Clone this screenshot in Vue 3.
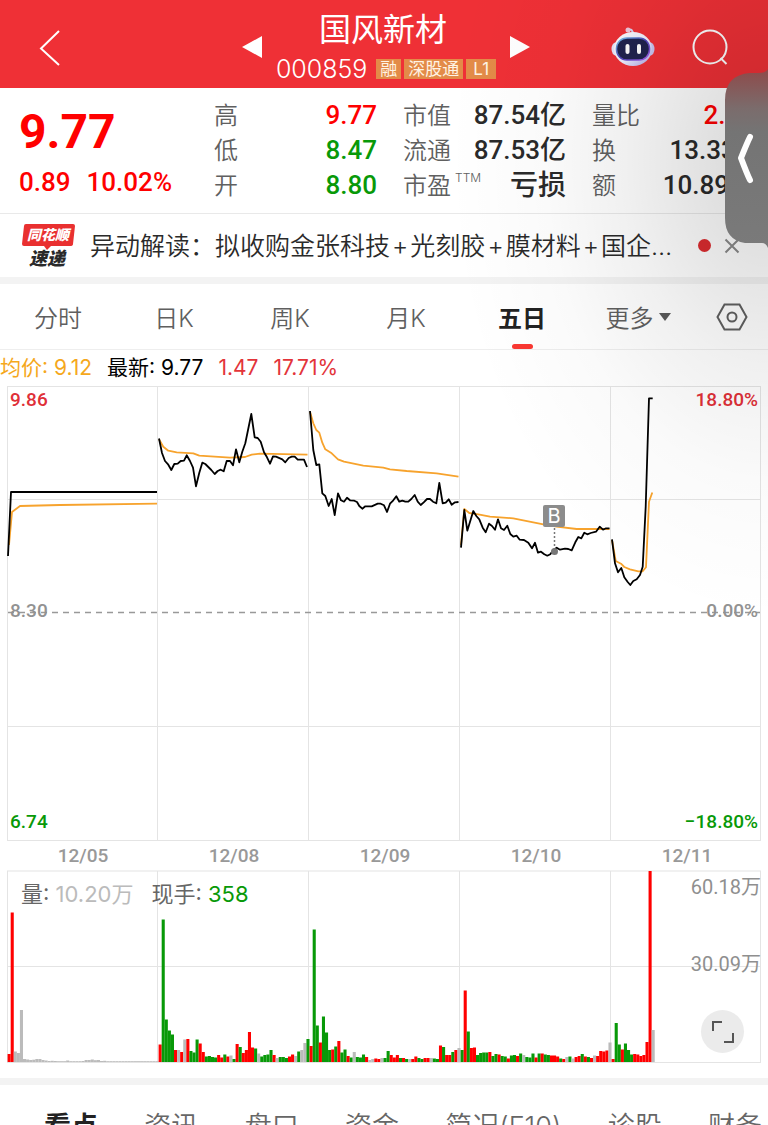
<script setup>
import { ref } from 'vue'

const tags = ['融', '深股通', 'L1']

const stats = [
  [
    { label: '高', value: '9.77', tone: 'up' },
    { label: '低', value: '8.47', tone: 'down' },
    { label: '开', value: '8.80', tone: 'down' },
  ],
  [
    { label: '市值', value: '87.54亿' },
    { label: '流通', value: '87.53亿' },
    { label: '市盈', sup: 'TTM', value: '亏损', tone: 'word' },
  ],
  [
    { label: '量比', value: '2.00', tone: 'up' },
    { label: '换', value: '13.33%' },
    { label: '额', value: '10.89亿' },
  ],
]

const newsParts = ['异动解读：拟收购金张科技', '光刻胶', '膜材料', '国企…']

const periods = ['分时', '日K', '周K', '月K', '五日']
const activePeriod = ref('五日')

const sections = ['看点', '资讯', '盘口', '资金', '简况(F10)', '诊股', '财务']
const activeSection = ref('看点')

const dates = ['12/05', '12/08', '12/09', '12/10', '12/11']
const dayWidth = 151
const gridX = [157.5, 308.5, 459.5, 610.5]

const averageLines = [
  '9,545 12,512 20,506 60,505 157,503.7',
  '159,439.3 163.3,446.7 168.3,450.7 176.7,452.3 193.3,453.3 199.3,455.7 230,457.7 245,457 251.7,454.7 260,453.7 307.5,454.7',
  '310,411.7 313.3,423.3 316.3,430 319.3,432.7 322.3,442.7 325.3,449.3 331.7,453.3 338,459.3 344,461.7 363.3,465.7 383.3,467.7 390,469.3 406.7,471 436.7,473.3 458.5,476.7',
  '461,545 464.3,509 469.3,513 478.3,514.3 490,516.7 513.3,518.3 543.3,524.3 556.7,526.7 576.7,529 609.5,529',
  '612,540 615.7,561 621,563.7 624.3,567 630,569.3 638.3,571.3 642.7,571.3 646,567.3 649,501.7 652.3,492.5',
]
const priceLines = [
  '8,556 11,492 157,492',
  '159,438.5 162,453 165,461 168.3,464.7 171.3,470 174.3,464 177.7,463.7 180.7,461 184,460.7 186.7,455.3 190,461 193,467.7 196,486.3 199.3,472.7 202.3,462.7 205.3,464 211.3,470 214.7,474 217.7,471 220.7,469.7 223.7,471.3 226.7,461 230,461 233,465.3 236,449.3 239.3,462.3 242.3,451.7 245.3,443.3 251.3,414 254.7,437.3 257.7,438 260.7,441.7 264,452.3 267,457.3 270,463.7 273,456.3 276,456.7 282.3,459.3 285.3,462.3 288.7,458 291.7,456.7 294.7,456.7 297.7,459.7 304,459.7 307,467',
  '310,411 313.3,450 316.3,465 319.3,464.3 322.3,493.3 325.3,496 328.7,506 331.7,499 334.7,515 338,493.3 341,500.3 344,501.7 347,497.7 350,500.3 354.3,500.7 357,502 359.3,506 362.3,508.7 365.3,506.3 371.7,506.3 377.7,503.7 380.7,503.7 384,505.3 387,512 390,503.7 393.3,500.3 396.3,496.3 399.3,501.7 402.3,500.7 405.3,501.7 408.3,501.7 411.3,499 414.7,495 417.7,501.7 420.7,505 423.7,502.3 427,499 430,499 433,501.7 436.3,503.3 439.3,483 442.7,503.3 445.7,502.7 448.7,499.3 451.7,504.7 455,502.3 458.5,502',
  '461,547.7 464.3,510 467.3,530.7 473.3,511 476.3,516 479.3,519.3 482.7,527.7 485.7,532.3 489,523.7 492,526 495,529.7 498,519.3 501,528.3 504,530 507.3,525.7 510.3,534 513.3,536.7 516.7,535.7 519.7,539.7 524,540 528.3,542.7 532,548.3 535,542.7 538,552.7 541,551.7 544.3,554.3 547.3,555.7 550.3,554.3 553.3,550 556.7,547.7 560,549.7 565,548.7 568.3,549 571.7,550.3 575.3,542.3 578.3,537 581.3,538.3 584.3,532.7 587.3,534.3 590.7,533 596,531.7 599.7,526.7 603,529.7 606,528.3 609.5,528.3',
  '612,539.3 615,563.3 618,572.3 621.3,568 624.3,577.3 627.7,582 630.3,585 633.3,581 636.7,579.3 640,575 642.7,566.7 645.7,506.7 649,398.3 652.7,398.3',
]

/* r = rising, g = falling, n = flat; the number is the bar height */
const volumes = [
  'r8 r149.5 n10.5 n9 n52 n3 n2.5 n2 n2.3 n3 n3 n2 n1.5 n1 n1.2 n1 n.8 n.8 n.8 n1.5 n.8 n.8 n.8 n.8 n1 n2 n2 n2.5 n1.8 n2 n1 n1.2 n.8 n.8 n.8 n.8 n.8 n.8 n.8 n.8 n.8 n.8 n.8 n.8 n.8 n.8 n.8 n.8 n.8',
  'r17.5 g142.5 g42.5 g31.5 g27.5 r12 n12 r10 n22.5 r23 g11 g9.5 g22.5 r18.5 r10 g5.5 g6 g5 g4.5 r7 r4.5 g7.5 r5.5 n6.5 g3 r18 g15 r9 r12 r30 r14.5 g13.5 n8.5 g5.5 g7 g7.5 g12 r7 n4 g5 g5 g4 r5.5 r7.5 n6 g10.5 n12 n19 g23',
  'r16 g132.5 g36.5 r19.5 g45.5 g29.5 g12 r12.5 g15.5 r21 g9.5 g12.5 r6 g4.5 n10 g5 g4.5 g7.5 r5 n2 n3 r3.5 r3 n4 g4 g11 r7 r4.5 r7 g4 r4 g3 n3 r3 r5.5 g4 g3 r4 r4 n4 g3.5 g3 r16.5 g15 r7 r7 g10 r12 n14',
  'g12 r71.5 g30.5 r14 r14.5 g7 g9 g9.5 g9.5 r10 g6 g8 r7.5 g6 g5.5 r3.5 g6.5 g7 r6 g8.5 n7 g5 g4.5 g8.5 r4.5 g8.5 r8.5 g7.5 g7 r6.5 r6.5 r5.5 g3.5 r3 n5 g5.5 n3.5 r5 r6 g8 r5.5 g5 r4 n6.5 r6 r11 r10.5 r11.5 n19.5',
  'r3 g39 g17.5 r12.5 g18.5 g12 g7.5 r8 r7.5 r6 r7 r20 r191 n32',
]
const fills = { r: '#ff0000', g: '#089908', n: '#bbbbbb' }
const bars = volumes.flatMap((day, d) =>
  day.split(' ').map((item, i) => ({
    key: `${d}-${i}`,
    x: 7.6 + d * dayWidth + i * 3.08,
    height: Number(item.slice(1)),
    fill: fills[item[0]],
  })),
)
</script>

<template>
  <div class="page">
    <header class="top">
      <button class="icon-button back" aria-label="返回">
        <svg width="22" height="38" viewBox="0 0 22 38"><path d="M20 2 2 19.500 20 36" fill="none" stroke="#fff" stroke-width="2" /></svg>
      </button>
      <div class="switcher">
        <button class="icon-button" aria-label="上一只">
          <svg width="20" height="24" viewBox="0 0 20 24"><path d="M20 1v22L0 12z" fill="#fff" /></svg>
        </button>
        <div class="identity">
          <h1>国风新材</h1>
          <div class="code-row">
            <span class="code">000859</span>
            <span v-for="tag in tags" :key="tag" class="tag">{{ tag }}</span>
          </div>
        </div>
        <button class="icon-button" aria-label="下一只">
          <svg width="20" height="24" viewBox="0 0 20 24"><path d="M0 1v22l20-11z" fill="#fff" /></svg>
        </button>
      </div>
      <div class="actions">
        <button class="icon-button" aria-label="智能助手">
          <svg width="44" height="42" viewBox="0 0 44 42">
            <defs>
              <linearGradient id="shell" x1="0" y1="0" x2="1" y2="1">
                <stop offset="0" stop-color="#ffffff" />
                <stop offset="0.550" stop-color="#f0efff" />
                <stop offset="1" stop-color="#aaa4e8" />
              </linearGradient>
              <linearGradient id="rim" x1="0" y1="0" x2="1" y2="1">
                <stop offset="0" stop-color="#77c8ee" />
                <stop offset="0.500" stop-color="#4c43b8" />
                <stop offset="1" stop-color="#a760ef" />
              </linearGradient>
            </defs>
            <path d="M17 4q5-2 5 5" fill="none" stroke="#d6d4f4" stroke-width="2" />
            <circle cx="17" cy="4" r="2.500" fill="#f1c9dc" />
            <ellipse cx="4.500" cy="23" rx="4" ry="6.500" fill="#e8e6fb" />
            <ellipse cx="39.500" cy="23" rx="4" ry="6.500" fill="#c9c3ef" />
            <ellipse cx="22" cy="23" rx="19" ry="17" fill="url(#shell)" />
            <rect x="5.500" y="12" width="33" height="22" rx="10.500" fill="#20234e" stroke="url(#rim)" stroke-width="1.500" />
            <rect x="14.500" y="18" width="4" height="10" rx="2" fill="#fff" />
            <rect x="26" y="18" width="4" height="10" rx="2" fill="#fff" />
          </svg>
        </button>
        <button class="icon-button" aria-label="搜索">
          <svg width="38" height="38" viewBox="0 0 38 38"><g fill="none" stroke="#fff" stroke-width="2"><circle cx="19" cy="19" r="16.500" /><path d="m29.500 30 6 6" /></g></svg>
        </button>
      </div>
    </header>

    <section class="quote">
      <div class="last">
        <strong>9.77</strong>
        <div class="change"><span>0.89</span><span>10.02%</span></div>
      </div>
      <dl v-for="(column, c) in stats" :key="c" class="stats">
        <div v-for="item in column" :key="item.label" class="stat">
          <dt>{{ item.label }}<sup v-if="item.sup">{{ item.sup }}</sup></dt>
          <dd :class="item.tone">{{ item.value }}</dd>
        </div>
      </dl>
    </section>

    <section class="news">
      <svg class="news-logo" width="54" height="46" viewBox="0 0 54 46" role="img" aria-label="同花顺速递">
        <path d="M4 1h47q2 0 2 2l-2 18q0 2-3 2H29l-4 4-3-4H2q-2 0-2-2L2 3q0-2 2-2z" fill="#e93030" />
        <text x="26" y="17" text-anchor="middle" class="logo-top">同花顺</text>
        <text x="25" y="42" text-anchor="middle" class="logo-bottom">速递</text>
      </svg>
      <a href="#" class="headline"><template v-for="(part, i) in newsParts" :key="i"><span v-if="i" class="plus">+</span>{{ part }}</template></a>
      <span class="dot"></span>
      <button class="icon-button" aria-label="关闭">
        <svg width="16" height="16" viewBox="0 0 16 16"><path d="m1.500 1.500 13 13m0-13-13 13" stroke="#8a8a8a" stroke-width="2" /></svg>
      </button>
    </section>

    <nav class="periods">
      <button v-for="period in periods" :key="period" :class="{ active: period === activePeriod }" @click="activePeriod = period">{{ period }}</button>
      <button class="more">更多<svg width="12" height="8" viewBox="0 0 12 8"><path d="M0 0h12L6 8z" fill="#5a5a5a" /></svg></button>
      <button class="settings" aria-label="图表设置">
        <svg width="32" height="28" viewBox="0 0 32 28"><g fill="none" stroke="#606060" stroke-width="2"><path d="M8.500 1.500h15L30.500 14l-7 12.500h-15L1.500 14z" /><circle cx="16" cy="14" r="4.500" /></g></svg>
      </button>
    </nav>

    <div class="legend">
      <span class="average">均价: 9.12</span>
      <span class="latest">最新: 9.77</span>
      <span class="rise">1.47</span>
      <span class="rise">17.71%</span>
    </div>

    <svg class="chart" viewBox="0 386 768 484" role="img" aria-label="五日走势">
      <g fill="none" stroke="#e4e4e4">
        <rect x="7.500" y="386.500" width="753" height="454" />
        <path v-for="x in gridX" :key="x" :d="`M${x} 387V840`" />
        <path d="M8 499.500H760M8 726.500H760" />
      </g>
      <path d="M8 612.500H760" stroke="#999" stroke-width="1.500" stroke-dasharray="6 5" />
      <polyline v-for="points in averageLines" :key="points" :points="points" class="line average-line" />
      <polyline v-for="points in priceLines" :key="points" :points="points" class="line price-line" />
      <path d="M554.500 528v20" stroke="#777" stroke-width="1.500" stroke-dasharray="2 2" />
      <circle cx="554.500" cy="551.500" r="3.500" fill="#777" />
      <rect x="543" y="505" width="22" height="22" rx="2" fill="#8c8c8c" />
      <text x="554" y="523" text-anchor="middle" class="marker">B</text>
      <g class="scale">
        <text x="10" y="406" class="high">9.86</text>
        <text x="758" y="406" text-anchor="end" class="high">18.80%</text>
        <text x="10" y="617">8.30</text>
        <text x="758" y="617" text-anchor="end">0.00%</text>
        <text x="10" y="828" class="low">6.74</text>
        <text x="758" y="828" text-anchor="end" class="low">−18.80%</text>
        <text v-for="(date, i) in dates" :key="date" :x="83 + i * dayWidth" y="862" text-anchor="middle" class="date">{{ date }}</text>
      </g>
    </svg>

    <div class="volume">
      <svg class="chart" viewBox="0 870 768 194" role="img" aria-label="成交量">
        <g fill="none" stroke="#e4e4e4">
          <rect x="7.500" y="871" width="753" height="191.500" />
          <path v-for="x in gridX" :key="x" :d="`M${x} 871V1062`" />
          <path d="M8 966.500H760" />
        </g>
        <rect v-for="bar in bars" :key="bar.key" :x="bar.x" :y="1062 - bar.height" width="3.080" :height="bar.height" :fill="bar.fill" />
        <text x="761" y="894" text-anchor="end" class="amount">60.18万</text>
        <text x="761" y="971" text-anchor="end" class="amount">30.09万</text>
      </svg>
      <div class="volume-legend">
        <span>量: <span class="muted">10.20万</span></span>
        <span>现手: <span class="hand">358</span></span>
      </div>
      <button class="expand" aria-label="全屏">
        <svg width="24" height="24" viewBox="0 0 24 24"><path d="M2 11V2h9M22 13v9h-9" fill="none" stroke="#555" stroke-width="2" /></svg>
      </button>
    </div>

    <nav class="sections">
      <button v-for="section in sections" :key="section" :class="{ active: section === activeSection }" @click="activeSection = section">{{ section }}</button>
    </nav>

    <div class="shade"></div>
    <button class="handle" aria-label="展开侧栏">
      <svg width="44" height="184" viewBox="0 0 44 184">
        <defs>
          <linearGradient id="grip" x1="0" y1="0" x2="0" y2="1">
            <stop offset="0" stop-color="#8e4a4a" />
            <stop offset="0.220" stop-color="#7b6c6c" />
            <stop offset="0.350" stop-color="#747474" />
            <stop offset="1" stop-color="#7a7a7a" />
          </linearGradient>
        </defs>
        <path d="M44 2q-2 4-10 4h-8Q1 8 1 33v118q0 22 20 25h17q4 0 6 5z" fill="url(#grip)" />
        <path d="M26 70q-3 6-9 21 6 16 9 22" fill="none" stroke="#fff" stroke-width="6" stroke-linecap="round" stroke-linejoin="round" />
      </svg>
    </button>
  </div>
</template>

<style>
body {
  overflow: hidden;
  background: #fff;
}
</style>

<style scoped>
.page {
  position: relative;
  height: 100vh;
  overflow: hidden;
  background: #fff;
  color: #2a2a2a;
  font-family: Inter, 'Noto Sans CJK SC', sans-serif;
}
button {
  margin: 0;
  padding: 0;
  border: 0;
  background: none;
  color: inherit;
  font: inherit;
  cursor: pointer;
}
svg {
  display: block;
}
.icon-button {
  flex: none;
}
.top {
  display: grid;
  grid-template-columns: 1fr auto 1fr;
  height: 88px;
  background: #ef3036;
  color: #fff;
}
.back {
  justify-self: start;
  align-self: center;
  margin: 8px 0 0 39px;
}
.switcher {
  display: flex;
  align-items: center;
  gap: 14px;
  padding-left: 4px;
}
.switcher > .icon-button {
  padding-top: 6px;
}
.identity {
  display: flex;
  flex-direction: column;
  align-items: center;
  padding-top: 6px;
}
h1 {
  margin: 0;
  padding-right: 6px;
  font-size: 32px;
  font-weight: 400;
  line-height: 44px;
}
.code-row {
  display: flex;
  align-items: center;
  gap: 3px;
  height: 34px;
}
.code {
  margin-right: 6px;
  font-size: 25px;
  font-weight: 300;
}
.tag {
  padding: 0 4px;
  background: #e38b48;
  color: #fff4e4;
  font-size: 17px;
  line-height: 20px;
}
.tag:last-child {
  padding: 0 7px;
}
.actions {
  display: flex;
  align-items: center;
  justify-content: flex-end;
  gap: 36px;
  padding: 6px 39px 0 0;
}
.quote {
  display: grid;
  grid-template-columns: 169fr 163fr 163fr 163fr;
  column-gap: 26px;
  padding: 10px 13px 10px 19px;
  border-bottom: 1px solid #e9e9e9;
}
.last {
  color: #ff0000;
  font-family: Roboto, sans-serif;
}
.last strong {
  display: block;
  padding-top: 2px;
  font-size: 48px;
  font-weight: 700;
  line-height: 64px;
}
.change {
  display: flex;
  gap: 16px;
  font-size: 26px;
  font-weight: 500;
  line-height: 36px;
}
.stats {
  margin: 0;
}
.stat {
  display: flex;
  justify-content: space-between;
  height: 35px;
  line-height: 35px;
  white-space: nowrap;
}
dt {
  color: #606060;
  font-size: 24px;
  font-weight: 350;
}
sup {
  padding-left: 4px;
  font-size: 12px;
  line-height: 12px;
  vertical-align: 12px;
}
dd {
  margin: 0;
  font-family: Roboto, 'Noto Sans CJK SC', sans-serif;
  font-size: 26px;
  font-weight: 500;
}
.word {
  font-size: 28px;
}
.up {
  color: #ff0000;
}
.down {
  color: #089908;
}
.news {
  display: flex;
  align-items: center;
  height: 63px;
  padding: 0 28px 0 22px;
  border-bottom: 7px solid #f3f3f3;
}
.news-logo {
  flex: none;
}
.logo-top,
.logo-bottom {
  font-family: 'Noto Sans CJK SC', sans-serif;
  font-style: italic;
  font-weight: 900;
}
.logo-top {
  fill: #fff;
  font-size: 14px;
}
.logo-bottom {
  fill: #2a2a2a;
  font-size: 18px;
}
.headline {
  flex: 1;
  margin-left: 14px;
  color: #2a2a2a;
  font-size: 25px;
  font-weight: 350;
  line-height: 36px;
  text-decoration: none;
  white-space: nowrap;
}
.plus {
  padding: 0 2px;
}
.dot {
  flex: none;
  width: 13px;
  height: 13px;
  margin-right: 13px;
  border-radius: 50%;
  background: #dc2c30;
}
.periods {
  display: grid;
  grid-template-columns: repeat(6, 116fr) 72fr;
  height: 65px;
  border-bottom: 1px solid #eee;
  color: #5f5f5f;
  font-size: 24px;
  font-weight: 350;
}
.periods button {
  position: relative;
}
.periods .active {
  color: #222;
  font-weight: 700;
}
.periods .active::after {
  content: '';
  position: absolute;
  bottom: 0;
  left: 50%;
  width: 21px;
  height: 5px;
  margin-left: -10px;
  border-radius: 3px;
  background: #fa3731;
}
.more {
  display: flex;
  align-items: center;
  justify-content: center;
  gap: 5px;
}
.settings {
  display: grid;
  place-items: center;
}
.legend {
  display: flex;
  gap: 15px;
  height: 36px;
  font-size: 21px;
  line-height: 36px;
}
.average {
  color: #f5a81c;
}
.latest {
  color: #000;
}
.rise {
  color: #e3343a;
}
.chart {
  width: 100%;
  height: auto;
}
.line {
  fill: none;
  stroke-width: 1.800;
  stroke-linejoin: round;
}
.average-line {
  stroke: #f7a32d;
}
.price-line {
  stroke: #000;
}
.marker {
  fill: #fff;
  font-size: 20px;
}
.scale {
  fill: #929292;
  font-family: Roboto, sans-serif;
  font-size: 19px;
  font-weight: 500;
}
.high {
  fill: #df3038;
}
.low {
  fill: #089908;
}
.date {
  fill: #999;
}
.amount {
  fill: #8f8f8f;
  font-family: Roboto, 'Noto Sans CJK SC', sans-serif;
  font-size: 20px;
}
.volume {
  position: relative;
  padding-bottom: 14px;
  border-bottom: 7px solid #f3f3f3;
}
.volume-legend {
  position: absolute;
  top: 8px;
  left: 21px;
  display: flex;
  gap: 18px;
  color: #666;
  font-size: 22px;
  line-height: 32px;
}
.muted {
  color: #bbb;
}
.hand {
  color: #089908;
}
.expand {
  position: absolute;
  right: 24px;
  bottom: 25px;
  display: grid;
  place-items: center;
  width: 43px;
  height: 43px;
  border-radius: 50%;
  background: #ebebeb;
}
.sections {
  display: flex;
  justify-content: space-between;
  padding: 22px 6px 20px 44px;
  color: #666;
  font-size: 27px;
  font-weight: 350;
  line-height: 40px;
  white-space: nowrap;
}
.sections .active {
  color: #222;
  font-weight: 700;
}
.shade {
  position: absolute;
  inset: 0;
  background: radial-gradient(320px 460px at 100% 160px, rgba(0, 0, 0, 0.160), rgba(0, 0, 0, 0.060) 45%, rgba(0, 0, 0, 0.020) 70%, transparent);
  pointer-events: none;
}
.handle {
  position: absolute;
  top: 67px;
  right: 0;
}
</style>
